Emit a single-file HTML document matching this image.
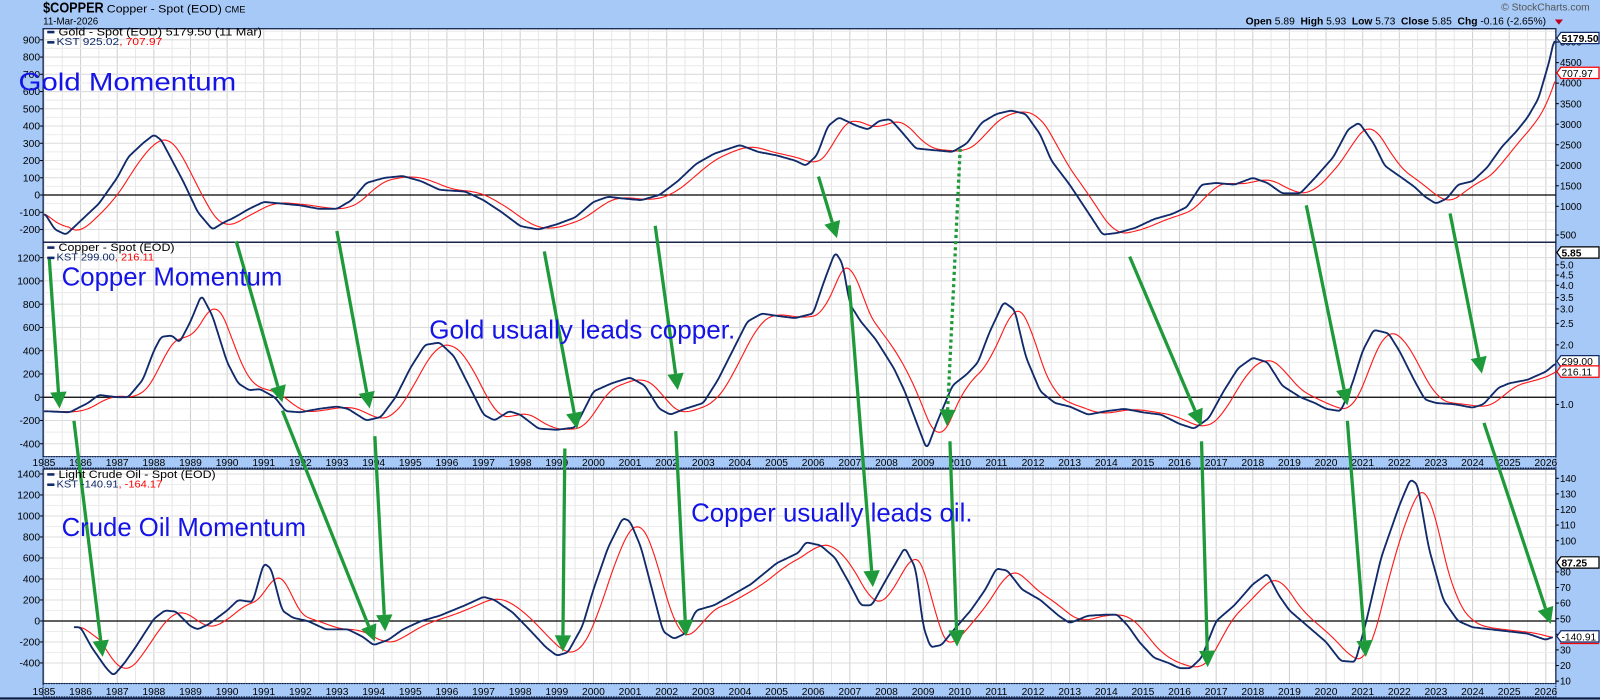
<!DOCTYPE html>
<html><head><meta charset="utf-8"><style>
html,body{margin:0;padding:0;background:#a6c9f7;overflow:hidden}
svg{display:block}
text{font-family:"Liberation Sans","DejaVu Sans",sans-serif}
</style></head><body>
<svg id="s" width="1600" height="700" viewBox="0 0 1558 682" preserveAspectRatio="none" xmlns="http://www.w3.org/2000/svg">
<rect x="0" y="0" width="1558" height="682" fill="#a6c9f7"/>
<g id="g"></g>
</svg>
<script>
var NS="http://www.w3.org/2000/svg",G=document.getElementById('g');
function el(t,a,txt){var e=document.createElementNS(NS,t);for(var k in a)e.setAttribute(k,a[k]);if(txt!=null)e.textContent=txt;G.appendChild(e);return e;}
var L=42,R=1515;
var P=[{t:28,b:236,z:190,s:0.168,labs:[900,800,700,600,500,400,300,200,100,0,-100,-200]},
       {t:236,b:445,z:387,s:0.1133,labs:[1200,1000,800,600,400,200,0,-200,-400]},
       {t:457,b:666,z:605,s:0.1023,labs:[1400,1200,1000,800,600,400,200,0,-200,-400]}];
P.forEach(function(p){el('rect',{x:L,y:p.t,width:R-L,height:p.b-p.t,fill:'#fff'});});
function yx(yr){return 42.8+(yr-1985)*35.67;}
P.forEach(function(p){
  for(var yr=1985;yr<=2026;yr++){var x=yx(yr);el('line',{x1:x,x2:x,y1:p.t,y2:p.b,stroke:'#cfcfcf','stroke-width':1});
    var xm=x+17.8;if(xm<R)el('line',{x1:xm,x2:xm,y1:p.t,y2:p.b,stroke:'#e8e8e8','stroke-width':1});}
  p.labs.forEach(function(v){var y=p.z-v*p.s;if(y>p.t&&y<p.b){el('line',{x1:L,x2:R,y1:y,y2:y,stroke:'#dcdcdc','stroke-width':1});}
    var yy=p.z-(v+ (p.labs[0]-p.labs[1])/2)*p.s;if(yy>p.t&&yy<p.b)el('line',{x1:L,x2:R,y1:yy,y2:yy,stroke:'#ececec','stroke-width':1});
    if(y>p.t-2&&y<p.b+2){el('text',{x:L-3,y:y+3.5,'font-size':10,'text-anchor':'end',fill:'#000'},v);el('line',{x1:L-3,x2:L,y1:y,y2:y,stroke:'#000'});}});
  el('line',{x1:L,x2:R,y1:p.z,y2:p.z,stroke:'#000','stroke-width':1.2});
  el('rect',{x:L,y:p.t,width:R-L,height:p.b-p.t,fill:'none',stroke:'#0c1a40','stroke-width':1.2});
});
[[445,456],[666,679]].forEach(function(d){
  el('rect',{x:L,y:d[0],width:R-L,height:d[1]-d[0],fill:'#a6c9f7',stroke:'#0c1a40','stroke-width':1,'stroke-dasharray':'1.5,1'});
  for(var yr=1985;yr<=2026;yr++){el('text',{x:yx(yr),y:d[1]-2,'font-size':10,'text-anchor':'middle',fill:'#000'},yr);}
});
el('line',{x1:0,x2:1558,y1:680.5,y2:680.5,stroke:'#0c1a40','stroke-width':2});
var gold=[[1985,-100],[1985.3,-200],[1985.6,-230],[1986,-150],[1986.5,-50],[1987,100],[1987.3,220],[1987.7,300],[1988,350],[1988.2,320],[1988.5,200],[1988.8,80],[1989.2,-100],[1989.6,-200],[1989.9,-160],[1990.2,-130],[1990.6,-80],[1991,-40],[1991.5,-50],[1992,-60],[1992.5,-80],[1993,-80],[1993.4,-30],[1993.8,70],[1994.3,100],[1994.8,110],[1995.3,80],[1995.8,30],[1996.5,20],[1997,-30],[1997.5,-100],[1998,-180],[1998.5,-200],[1999,-170],[1999.5,-130],[2000,-40],[2000.4,-10],[2000.8,-20],[2001.3,-30],[2001.8,0],[2002.3,80],[2002.8,180],[2003.3,240],[2004,290],[2004.5,250],[2005,230],[2005.5,200],[2005.8,170],[2006.1,230],[2006.4,400],[2006.7,450],[2007.2,400],[2007.5,380],[2007.8,430],[2008.1,440],[2008.4,370],[2008.8,270],[2009.3,260],[2009.8,250],[2010.2,300],[2010.6,420],[2011,470],[2011.4,490],[2011.8,470],[2012.2,350],[2012.5,200],[2013,60],[2013.5,-100],[2013.9,-230],[2014.3,-220],[2014.8,-190],[2015.3,-140],[2015.8,-110],[2016.2,-70],[2016.6,60],[2017,70],[2017.5,60],[2018,100],[2018.4,70],[2018.8,10],[2019.3,10],[2019.7,100],[2020.2,220],[2020.6,380],[2020.9,420],[2021.3,300],[2021.6,170],[2022,110],[2022.4,50],[2022.7,-10],[2023,-50],[2023.3,-20],[2023.6,60],[2024,80],[2024.4,160],[2024.8,280],[2025.2,370],[2025.5,450],[2025.8,560],[2026.1,780],[2026.25,925]];
var cop=[[1985,-120],[1985.7,-130],[1986.2,-50],[1986.5,20],[1987,0],[1987.3,0],[1987.7,150],[1988,400],[1988.2,520],[1988.5,530],[1988.7,470],[1989,650],[1989.3,880],[1989.6,700],[1990,300],[1990.3,120],[1990.6,60],[1990.9,70],[1991.3,0],[1991.6,-120],[1992,-130],[1992.5,-100],[1993,-80],[1993.3,-100],[1993.8,-200],[1994.2,-170],[1994.6,0],[1995,250],[1995.4,450],[1995.8,470],[1996.2,350],[1996.6,100],[1997,-150],[1997.3,-200],[1997.7,-120],[1998,-150],[1998.5,-270],[1999,-280],[1999.5,-260],[2000,50],[2000.5,120],[2001,170],[2001.4,100],[2001.8,-100],[2002.1,-150],[2002.5,-100],[2003,-50],[2003.4,150],[2003.8,400],[2004.2,650],[2004.6,720],[2005,700],[2005.5,680],[2006,720],[2006.3,1000],[2006.6,1250],[2006.8,1150],[2007,800],[2007.3,650],[2007.7,500],[2008.2,250],[2008.5,50],[2008.8,-200],[2009.1,-450],[2009.4,-200],[2009.8,100],[2010.2,200],[2010.5,300],[2010.8,550],[2011.2,820],[2011.5,750],[2011.8,350],[2012.2,50],[2012.6,-50],[2013,-80],[2013.5,-150],[2014,-120],[2014.5,-100],[2015,-130],[2015.5,-150],[2016,-230],[2016.4,-270],[2016.8,-180],[2017.2,50],[2017.6,250],[2018,340],[2018.4,300],[2018.8,100],[2019.3,0],[2019.7,-50],[2020,-100],[2020.4,-120],[2020.7,100],[2021,400],[2021.3,580],[2021.7,550],[2022,400],[2022.4,150],[2022.7,-20],[2023,-50],[2023.5,-60],[2024,-90],[2024.3,-60],[2024.7,80],[2025,120],[2025.5,150],[2026,220],[2026.3,299]];
var oil=[[1985.8,-60],[1986,-60],[1986.3,-250],[1986.7,-450],[1986.9,-520],[1987.2,-400],[1987.5,-250],[1988,20],[1988.3,100],[1988.6,90],[1989,-50],[1989.2,-80],[1989.5,-30],[1990,100],[1990.3,200],[1990.7,180],[1991,550],[1991.2,500],[1991.5,100],[1991.8,30],[1992.2,0],[1992.7,-80],[1993.3,-80],[1993.7,-150],[1994,-230],[1994.4,-180],[1994.8,-80],[1995.3,0],[1995.8,50],[1996.5,150],[1997,230],[1997.3,200],[1997.8,80],[1998.3,-100],[1998.7,-250],[1999,-330],[1999.3,-300],[1999.7,-50],[2000,300],[2000.4,700],[2000.8,980],[2001,950],[2001.3,700],[2001.6,300],[2001.9,-100],[2002.2,-170],[2002.5,-120],[2002.8,100],[2003.3,150],[2003.8,250],[2004.3,350],[2005,550],[2005.6,650],[2005.8,750],[2006.2,720],[2006.6,600],[2007,350],[2007.3,150],[2007.6,150],[2008,400],[2008.5,700],[2008.8,500],[2009,-50],[2009.2,-250],[2009.5,-230],[2009.8,-100],[2010.3,100],[2010.7,300],[2011,500],[2011.3,480],[2011.7,300],[2012.2,200],[2012.7,50],[2013,-20],[2013.5,50],[2014,60],[2014.3,60],[2014.6,-50],[2014.9,-200],[2015.3,-350],[2015.7,-400],[2016,-450],[2016.3,-450],[2016.6,-350],[2017,0],[2017.5,150],[2018,350],[2018.4,450],[2018.7,250],[2019,100],[2019.5,-50],[2020,-200],[2020.4,-380],[2020.8,-390],[2021.1,0],[2021.5,600],[2021.8,900],[2022,1100],[2022.3,1350],[2022.5,1300],[2022.8,700],[2023.2,200],[2023.6,0],[2024,-60],[2024.5,-80],[2025,-100],[2025.5,-120],[2026,-180],[2026.2,-150]];
function conv(d,p){return d.map(function(a){return [yx(a[0]),p.z-a[1]*p.s];});}
function interp(pts){var out=[],j=0;for(var x=Math.ceil(pts[0][0]);x<=pts[pts.length-1][0];x++){while(j<pts.length-2&&pts[j+1][0]<x)j++;var a=pts[j],b=pts[j+1],t=(x-a[0])/(b[0]-a[0]);out.push([x,a[1]+(b[1]-a[1])*t]);}return out;}
function smooth(ip,w){var r=[];for(var i=0;i<ip.length;i++){var s=0,n=0;for(var k=Math.max(0,i-w);k<=Math.min(ip.length-1,i+w);k++){s+=ip[k][1];n++;}r.push([ip[i][0],s/n]);}return r;}
function draw(raw,p){
  var pts=conv(raw,p);
  var ip=smooth(interp(pts),2),r=[];
  for(var i=0;i<ip.length;i++){var s=0,n=0;for(var k=Math.max(0,i-24);k<=i;k++){s+=ip[k][1];n++;}r.push([ip[i][0],(s/n).toFixed(1)]);}
  var rd='M'+r.filter(function(q,i){return i%2==0||i==r.length-1;}).map(function(q){return q.join(',');}).join('L');
  var d='M'+ip.map(function(q){return q[0]+','+q[1].toFixed(1);}).join('L');
  el('path',{d:rd,fill:'none',stroke:'#ff1a1a','stroke-width':1.1});
  el('path',{d:d,fill:'none',stroke:'#102a6a','stroke-width':1.8,'stroke-linejoin':'round'});
}
draw(gold,P[0]);draw(cop,P[1]);draw(oil,P[2]);
var A=[[48,252,58,398],[72,410,100,640],[230,235,275,392],[275,400,365,625],[328,225,360,398],[365,425,375,615],[530,245,562,418],[550,437,548,635],[638,220,660,380],[658,420,668,620],[797,172,815,232],[827,278,850,572],[922,415,935,145,1],[925,430,932,630],[1100,250,1170,415],[1170,430,1176,650],[1272,200,1312,395],[1312,410,1330,640],[1412,208,1443,364],[1445,412,1510,608]];
A.forEach(function(a){
  var x1=a[0],y1=a[1],x2=a[2],y2=a[3],dotted=a[4];
  if(dotted){x1=a[2];y1=a[3];x2=a[0];y2=a[1];}
  var dx=x2-x1,dy=y2-y1,len=Math.sqrt(dx*dx+dy*dy),ux=dx/len,uy=dy/len,h=16,w=8;
  var bx=x2-ux*h,by=y2-uy*h;
  var at={x1:x1,y1:y1,x2:bx,y2:by,stroke:'#1f9a3a','stroke-width':3.2};
  if(dotted)at['stroke-dasharray']='3,3';
  el('line',at);
  el('polygon',{points:x2+','+y2+' '+(bx-uy*w)+','+(by+ux*w)+' '+(bx+uy*w)+','+(by-ux*w),fill:'#1f9a3a'});
});
function big(x,y,t,w,fs){el('text',{x:x,y:y,'font-size':fs,fill:'#1414e6',textLength:w,lengthAdjust:'spacingAndGlyphs'},t);}
big(18,88,'Gold Momentum',212,24);big(60,278,'Copper Momentum',215,25);big(418,330,'Gold usually leads copper.',298,25);big(60,522,'Crude Oil Momentum',238,25);big(673,508,'Copper usually leads oil.',274,25);
function leg(y,name,a,b,w1,w2){
  if(name){el('rect',{x:46,y:y-10,width:7,height:2.5,fill:'#102a6a'});el('text',{x:57,y:y-5.5,'font-size':11,fill:'#000','font-family':'DejaVu Sans, sans-serif',textLength:w1,lengthAdjust:'spacingAndGlyphs'},name);}
  el('rect',{x:46,y:y,width:7,height:2.5,fill:'#102a6a'});
  var t=el('text',{x:55,y:y+4,'font-size':10,fill:'#102a6a',textLength:w2,lengthAdjust:'spacingAndGlyphs'});
  var s1=document.createElementNS(NS,'tspan');s1.textContent='KST '+a;t.appendChild(s1);
  var s2=document.createElementNS(NS,'tspan');s2.setAttribute('fill','#ff0000');s2.textContent=', '+b;t.appendChild(s2);
}
leg(40,'Gold - Spot (EOD) 5179.50 (11 Mar)','925.02','707.97',198,103);
leg(250,'Copper - Spot (EOD)','299.00','216.11',113,95);
leg(471,'Light Crude Oil - Spot (EOD)','-140.91','-164.17',153,103);
function rl(y,t){el('text',{x:R+4,y:y+3.5,'font-size':9.5,fill:'#000'},t);el('line',{x1:R,x2:R+3,y1:y,y2:y,stroke:'#000'});}
[5000,4500,4000,3500,3000,2500,2000,1500,1000].forEach(function(v,i){rl(41+i*20,v);});
rl(229,'500');
[['5.0',258],['4.5',268],['4.0',278],['3.5',290],['3.0',301],['2.5',315],['2.0',336],['1.0',394]].forEach(function(a){rl(a[1],a[0]);});
for(var v=140;v>=10;v-=10){var y=466+(140-v)*1.52;if(v!=90)rl(y,v);}
function tag(y,t,col,bold){el('polygon',{points:(R+1)+','+y+' '+(R+5)+','+(y-5.5)+' '+(R+42)+','+(y-5.5)+' '+(R+42)+','+(y+5.5)+' '+(R+5)+','+(y+5.5),fill:'#fff',stroke:col,'stroke-width':1.2});
  el('text',{x:R+5.5,y:y+3.8,'font-size':10,fill:'#000','font-weight':bold?'bold':'normal'},t);}
tag(37,'5179.50','#102a6a',1);tag(71,'707.97','#ff0000');
tag(246,'5.85','#000',1);tag(352,'299.00','#102a6a');tag(362,'216.11','#ff0000');
tag(548,'87.25','#000',1);tag(620,'-140.91','#102a6a');
el('line',{x1:R+4,x2:R+42,y1:627,y2:627,stroke:'#ff0000','stroke-width':1.2});
el('text',{x:42,y:12,'font-size':14,'font-weight':'bold',fill:'#000',textLength:59,lengthAdjust:'spacingAndGlyphs'},'$COPPER');
el('text',{x:104,y:12,'font-size':11,fill:'#000',textLength:112,lengthAdjust:'spacingAndGlyphs'},'Copper - Spot (EOD)');
el('text',{x:219,y:12,'font-size':9,fill:'#000'},'CME');
el('text',{x:42,y:24,'font-size':9.5,fill:'#000'},'11-Mar-2026');
el('text',{x:1548,y:10,'font-size':10,fill:'#555','text-anchor':'end'},'© StockCharts.com');
var q=el('text',{x:1213,y:24,'font-size':10,fill:'#000',textLength:298,lengthAdjust:'spacingAndGlyphs'});
[['Open',' 5.89  '],['High',' 5.93  '],['Low',' 5.73  '],['Close',' 5.85  '],['Chg',' -0.16 (-2.65%)']].forEach(function(p){
 var a=document.createElementNS(NS,'tspan');a.setAttribute('font-weight','bold');a.textContent=p[0];q.appendChild(a);
 var c=document.createElementNS(NS,'tspan');c.textContent=p[1].replace(/ +$/,'')+'\u00a0\u00a0';q.appendChild(c);});
el('polygon',{points:'1514,19 1522,19 1518,24',fill:'#c00020'});
</script>
</body></html>
